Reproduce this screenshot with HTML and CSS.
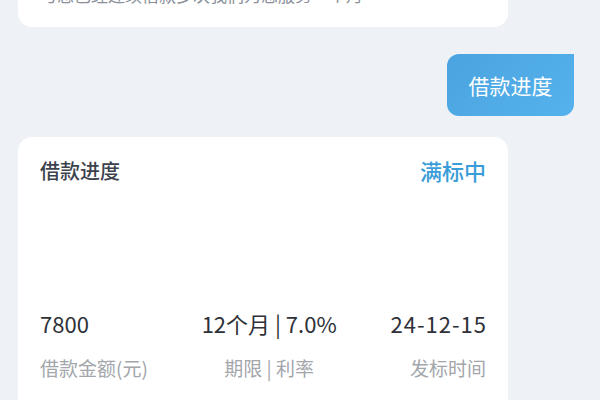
FILE: index.html
```html
<!DOCTYPE html>
<html lang="zh-CN">
<head>
    <meta charset="UTF-8">
    <meta name="viewport" content="width=device-width, initial-scale=1.0">
    <title>借款进度</title>
    <link rel="stylesheet" href="styles.css">
</head>
<body>
    <div class="chat">
        <div class="card card-top">
            <p class="tip">与您已经连续借款多次我们为您服务一个月</p>
        </div>

        <div class="row-right">
            <div class="bubble">借款进度</div>
        </div>

        <div class="card card-progress">
            <div class="card-head">
                <span class="card-title">借款进度</span>
                <span class="card-status">满标中</span>
            </div>
            <div class="stats">
                <div class="stat stat-left">
                    <div class="stat-value">7800</div>
                    <div class="stat-label">借款金额(元)</div>
                </div>
                <div class="stat stat-mid">
                    <div class="stat-value">12个月 | 7.0%</div>
                    <div class="stat-label">期限 | 利率</div>
                </div>
                <div class="stat stat-right">
                    <div class="stat-value date">24-12-15</div>
                    <div class="stat-label">发标时间</div>
                </div>
            </div>
        </div>
    </div>
</body>
</html>
```

FILE: styles.css
```css
html, body {
    margin: 0;
    padding: 0;
}
body {
    background-color: #eef1f5;
    font-family: "Noto Sans CJK SC", "Noto Sans", sans-serif;
    overflow: hidden;
}
.chat {
    padding: 0 26px 0 18px;
}
.card {
    background-color: #fff;
    border-radius: 14px;
    width: 490px;
    box-sizing: border-box;
}
.card-top {
    margin-top: -37px;
    padding: 20px 22px;
}
.tip {
    margin: 0;
    font-size: 17px;
    line-height: 24px;
    color: #8a8f99;
}
.row-right {
    display: flex;
    justify-content: flex-end;
    margin-top: 27px;
}
.bubble {
    width: 127px;
    height: 62px;
    display: flex;
    align-items: center;
    justify-content: center;
    background: linear-gradient(135deg, #4aa3df, #55b2ec);
    color: #fff;
    font-size: 21px;
    border-radius: 12px 0 12px 12px;
}
.card-progress {
    margin-top: 21px;
    padding: 20px 22px 22px;
    height: 300px;
}
.card-head {
    display: flex;
    justify-content: space-between;
    align-items: center;
    height: 26px;
}
.card-title {
    font-size: 20px;
    font-weight: 500;
    color: #3c424d;
}
.card-status {
    font-size: 22px;
    font-weight: 500;
    color: #3a9dd7;
}
.stats {
    display: flex;
    justify-content: space-between;
    margin-top: 126px;
}
.stat-mid {
    text-align: center;
}
.stat-right {
    text-align: right;
}
.stat-value {
    font-size: 22px;
    line-height: 28px;
    color: #2e3138;
}
.stat-value.date {
    letter-spacing: 1px;
    margin-right: -1px;
}
.stat-label {
    margin-top: 18px;
    font-size: 19px;
    line-height: 26px;
    color: #a3a6ab;
}
```
